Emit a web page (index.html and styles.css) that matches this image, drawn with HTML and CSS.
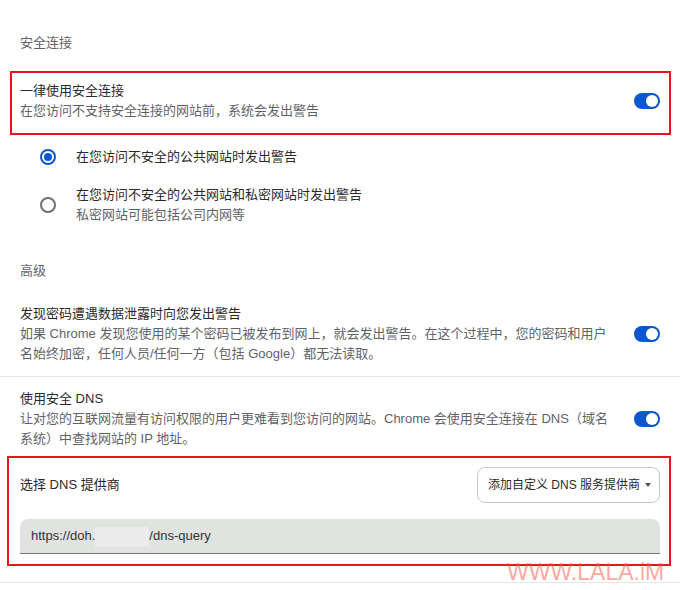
FILE: index.html
```html
<!DOCTYPE html>
<html lang="zh-CN">
<head>
    <meta charset="UTF-8">
    <meta name="viewport" content="width=device-width, initial-scale=1.0">
    <title>安全</title>
    <link rel="stylesheet" href="styles.css">
</head>
<body>

    <div class="page">
        <div class="section-title first">安全连接</div>

        <div class="mark-box https-box">
            <div class="row-text">
                <div class="label">一律使用安全连接</div>
                <div class="sub">在您访问不支持安全连接的网站前，系统会发出警告</div>
            </div>
            <span class="toggle"></span>
        </div>

        <div class="radio-list">
            <div class="radio-row single">
                <span class="radio checked"></span>
                <div class="radio-text">在您访问不安全的公共网站时发出警告</div>
            </div>
            <div class="radio-row">
                <span class="radio"></span>
                <div class="radio-text">
                    <div>在您访问不安全的公共网站和私密网站时发出警告</div>
                    <div class="sub">私密网站可能包括公司内网等</div>
                </div>
            </div>
        </div>

        <div class="section-title">高级</div>

        <div class="setting-row divided">
            <div class="row-text">
                <div class="label">发现密码遭遇数据泄露时向您发出警告</div>
                <div class="sub">如果 Chrome 发现您使用的某个密码已被发布到网上，就会发出警告。在这个过程中，您的密码和用户名始终加密，任何人员/任何一方（包括 Google）都无法读取。</div>
            </div>
            <span class="toggle"></span>
        </div>

        <div class="setting-row dns-row">
            <div class="row-text">
                <div class="label">使用安全 DNS</div>
                <div class="sub">让对您的互联网流量有访问权限的用户更难看到您访问的网站。Chrome 会使用安全连接在 DNS（域名系统）中查找网站的 IP 地址。</div>
            </div>
            <span class="toggle"></span>
        </div>

        <div class="mark-box dns-box">
            <div class="dns-head">
                <div class="label">选择 DNS 提供商</div>
                <div class="select">
                    添加自定义 DNS 服务提供商
                    <span class="caret"></span>
                </div>
            </div>
            <div class="dns-input">https://doh.<span class="blurred"></span>/dns-query</div>
        </div>

        <div class="bottom-line"></div>

        <div class="watermark">WWW.LALA.iM</div>
    </div>

</body>
</html>
```

FILE: styles.css
```css
body {
    margin: 0;
    background: #fff;
    font-family: "Liberation Sans", "Noto Sans CJK SC", sans-serif;
    font-size: 13px;
    line-height: 20px;
    color: #333;
}
.page {
    position: relative;
    width: 680px;
    height: 590px;
    overflow: hidden;
}
.section-title {
    padding: 30px 20px 0;
    color: #5f6368;
}
.section-title.first {
    padding-top: 33px;
}
.label {
    color: #2a2a2a;
}
.sub {
    color: #5f6368;
}

/* red highlight boxes */
.mark-box {
    border: 2px solid #e8141d;
}
.https-box {
    margin: 18px 9px 0 10px;
    padding: 8px 9px 12px 8px;
    display: flex;
    align-items: center;
    justify-content: space-between;
}

.toggle {
    position: relative;
    flex: none;
    width: 26px;
    height: 16px;
    border-radius: 8px;
    background: #0b57d0;
}
.toggle::after {
    content: "";
    position: absolute;
    right: 2px;
    top: 2px;
    width: 12px;
    height: 12px;
    border-radius: 50%;
    background: #fff;
}

/* radio group */
.radio-list {
    padding-left: 40px;
}
.radio-row {
    display: flex;
    align-items: center;
    gap: 20px;
    padding: 6px 0;
}
.radio-row.single {
    padding: 0;
    height: 44px;
}
.radio {
    flex: none;
    box-sizing: border-box;
    width: 16px;
    height: 16px;
    border-radius: 50%;
    border: 2px solid #6f6f6f;
    position: relative;
}
.radio.checked {
    border-color: #0b57d0;
}
.radio.checked::after {
    content: "";
    position: absolute;
    left: 2px;
    top: 2px;
    width: 8px;
    height: 8px;
    border-radius: 50%;
    background: #0b57d0;
}
.radio-text {
    color: #2a2a2a;
}

/* toggles with description */
.setting-row {
    display: flex;
    align-items: center;
    justify-content: space-between;
    padding: 23px 20px 12px;
}
.setting-row .row-text {
    max-width: 592px;
}
.divided {
    border-bottom: 1px solid #e6e6e6;
}
.dns-row {
    padding: 12px 20px 0;
}

/* dns provider */
.dns-box {
    margin: 7px 9px 0 7px;
    padding: 9px 9px 10px 11px;
}
.dns-head {
    display: flex;
    align-items: center;
    justify-content: space-between;
}
.select {
    box-sizing: border-box;
    height: 36px;
    width: 183px;
    display: flex;
    align-items: center;
    justify-content: space-between;
    padding: 0 8px 0 10px;
    border: 1px solid #c7c7c7;
    border-radius: 8px;
    font-size: 12px;
    color: #2a2a2a;
}
.caret {
    width: 0;
    height: 0;
    border-left: 3.5px solid transparent;
    border-right: 3.5px solid transparent;
    border-top: 4px solid #555;
}
.dns-input {
    margin-top: 16px;
    height: 34px;
    line-height: 34px;
    padding-left: 11px;
    background: #e1e3e1;
    border-bottom: 1px solid #747775;
    border-radius: 8px 8px 0 0;
    color: #333;
}
.blurred {
    display: inline-block;
    width: 54px;
    height: 20px;
    vertical-align: middle;
    background: #ececec;
}

.bottom-line {
    margin-top: 16px;
    border-top: 1px solid #e6e6e6;
}

.watermark {
    position: absolute;
    left: 507px;
    top: 561px;
    font-family: "Liberation Sans", Arial, sans-serif;
    font-size: 23px;
    line-height: 23px;
    color: rgba(247, 80, 60, 0.5);
    white-space: nowrap;
}
```
